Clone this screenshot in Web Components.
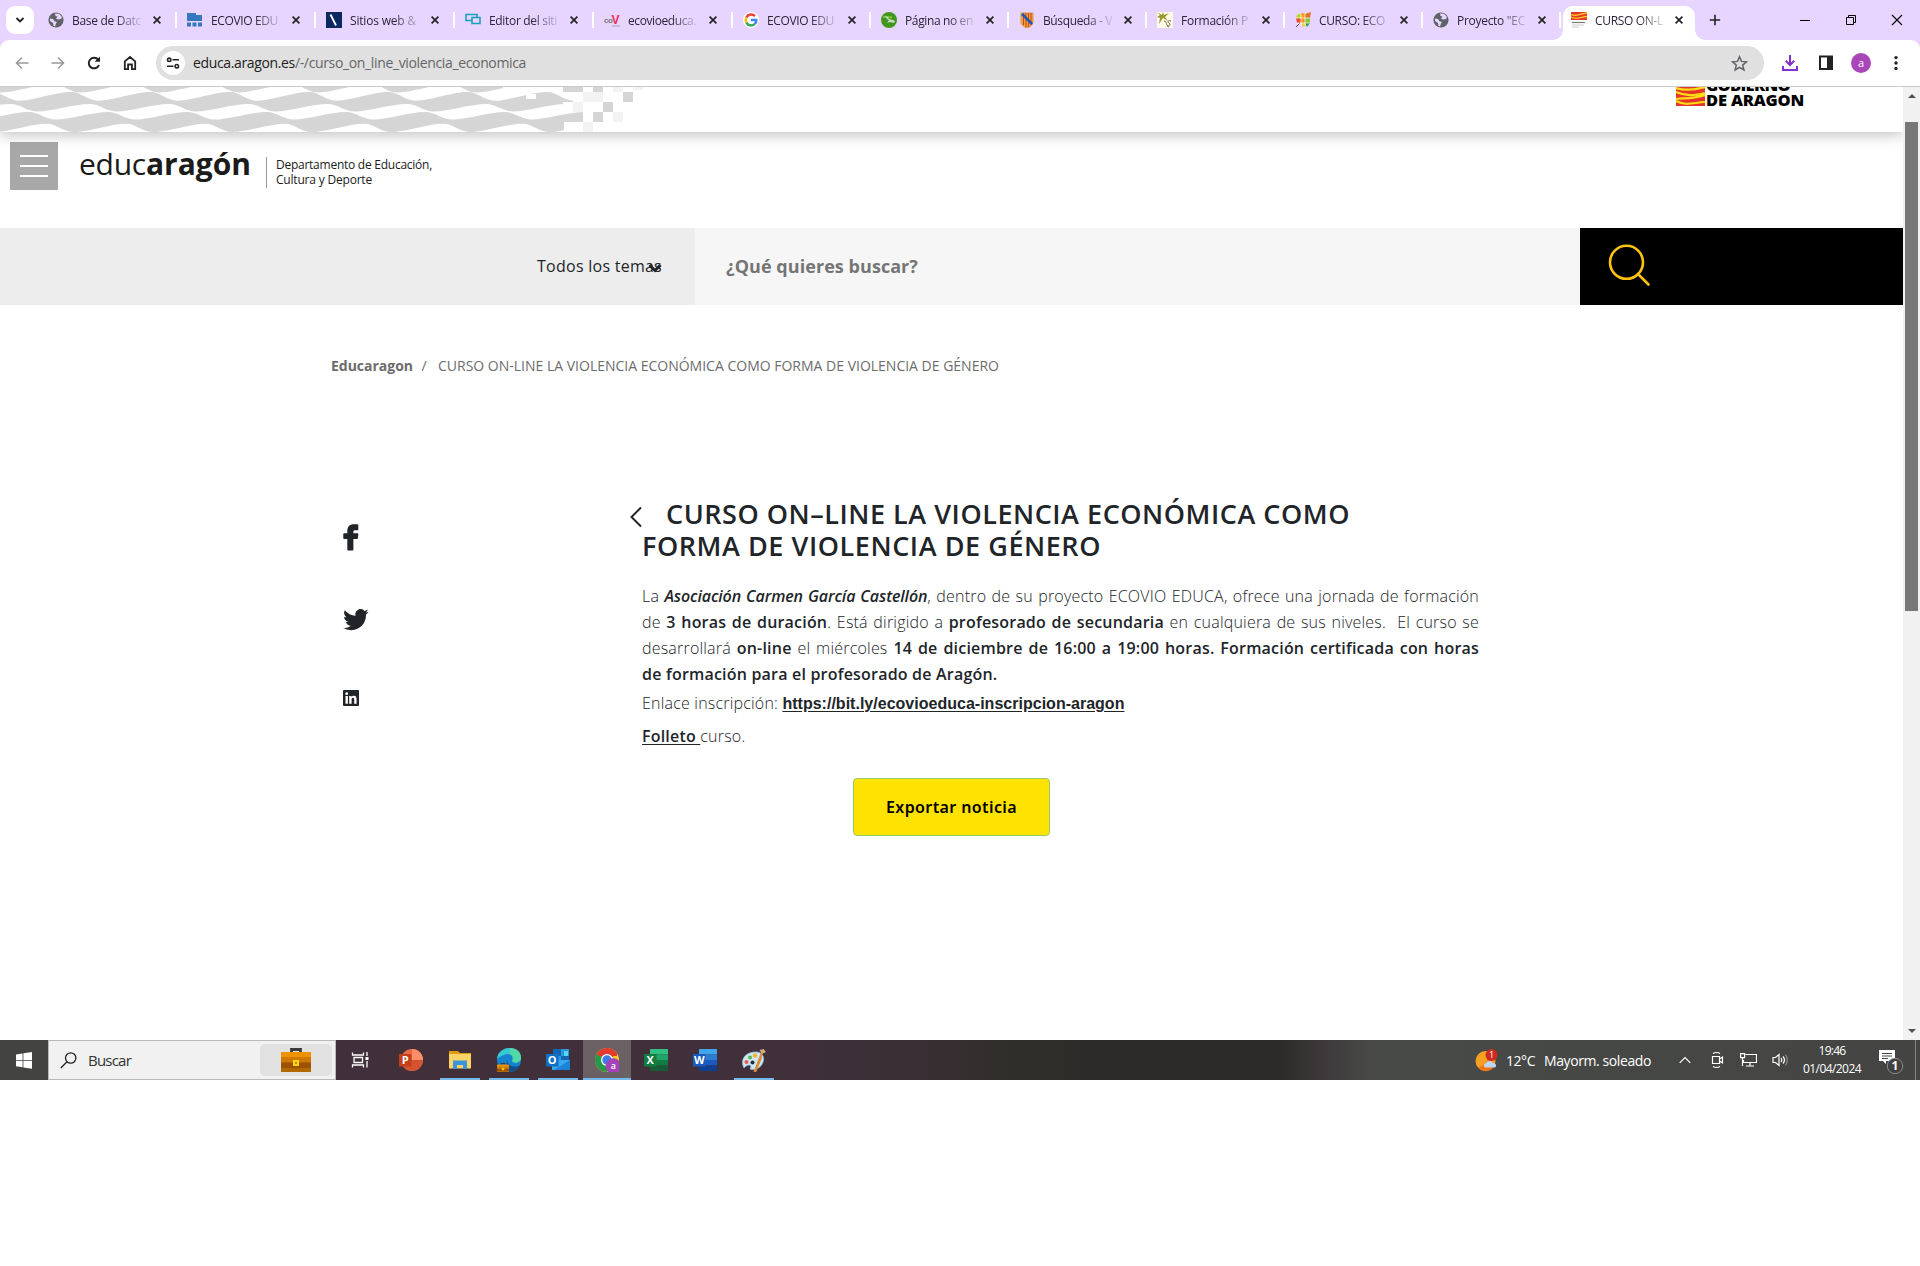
<!DOCTYPE html>
<html lang="es">
<head>
<meta charset="utf-8">
<title>CURSO ON-LINE LA VIOLENCIA ECONÓMICA</title>
<style>
    html, body { margin: 0; background: #fff; }
    body { font-family: "Open Sans", "Noto Sans", sans-serif; color: #212529; width: 1920px; height: 1266px; overflow: hidden; }
</style>
</head>
<body>
<desktop-screen></desktop-screen>

<script>
// Shared base: every component only supplies its markup
class BaseElement extends HTMLElement {
    constructor() {
        super();
        this.attachShadow({ mode: 'open' });
    }

    connectedCallback() {
        this.shadowRoot.innerHTML = this.template().trim();
        this.init();
    }

    template() { return ''; }
    init() {}
}

// One line of text tracked to an exact width
class FitText extends BaseElement {
    template() {
        return `<style>
            :host { display: inline-block; white-space: nowrap; width: ${this.getAttribute('w')}px; }
            span { display: inline-block; }
        </style><span><slot></slot></span>`;
    }

    init() {
        const span = this.shadowRoot.querySelector('span');
        const target = parseFloat(this.getAttribute('w'));
        const count = this.textContent.length;
        span.style.letterSpacing = '0px';
        const natural = span.getBoundingClientRect().width;
        span.style.letterSpacing = `${((target - natural) / count).toFixed(3)}px`;
    }
}

const GLOBE = `<circle cx="8" cy="8" r="7.6" fill="#5f6368"/><path d="M2 6.5l3 .5 1.5 2.2L9 10l-1 1.5-1 3-1.500-.5L5 11 2 9zM7 1.500l4 .3L14 5l-1 2-3 .5-2-1L9.500 4.500 7.500 4z" fill="#e8d5ff"/>`;

const FAVICONS = {
    globe: GLOBE,
    blocks: `<path d="M0 1h9v2h6v6H0z" fill="#3478c0"/><path d="M0 10.500h4v4H0zM5.500 10.500h4v4h-4zM11 10.500h4v4h-4z" fill="#3478c0"/>`,
    navy: `<path d="M0 0h16v16H0z" fill="#0c2860"/><path d="M4.500 2.500l5.500 11" stroke="#fff" stroke-width="1.800"/>`,
    frames: `<path d="M7 8.500H1v-6h11V5M7 5.500h8v6H7z" fill="none" stroke="#1a9fc0" stroke-width="1.600"/>`,
    cov: `<text x="0" y="11" font-size="8" font-weight="700" font-family="Liberation Sans" fill="#777" textLength="9">co</text><text x="7.500" y="12" font-size="12" font-weight="700" font-family="Liberation Sans" fill="#ee2c55">V</text><path d="M8 14h8" stroke="#aaa"/>`,
    google: `<circle cx="8" cy="8" r="8" fill="#fff"/><g fill="none" stroke-width="2.500"><path d="M12 4.200A5.300 5.300 0 0 0 3.400 5.400" stroke="#ea4335"/><path d="M3.400 5.400a5.300 5.300 0 0 0 0 5.200" stroke="#fbbc05"/><path d="M3.400 10.600a5.300 5.300 0 0 0 8.200 1.500" stroke="#34a853"/><path d="M11.600 12.100A5 5 0 0 0 13.300 8H8" stroke="#4285f4"/></g>`,
    green: `<circle cx="8" cy="8" r="8" fill="#3f981b"/><path d="M2 5c4-1 5 1 9 0" stroke="#75c43d" stroke-width="2"/><path d="M4 4l3 1 1 2 4 1 2 1-1 2-4-1-3 1 2-3-2-1z" fill="#cbd6c4"/>`,
    shield: `<path d="M2 1h12v9c0 3-3 5-6 6-3-1-6-3-6-6z" fill="#f6b12e" stroke="#c9994c"/><path d="M4.500 1v12M7 1v14M9.500 1v14M12 1v12" stroke="#d5402c" stroke-width="1.200"/><path d="M3 2l10 10" stroke="#2455b8" stroke-width="2.600"/>`,
    star: `<path d="M0 0h16v16H0z" fill="#fffbe8"/><path d="M0 0l5 3 1-3 1 3 5-2-4 4 3 4-5-3-4 6 1-6-3-1 3-2z" fill="#99992a"/><path d="M7 9c3 0 2 5 5 6M14 9c-3-1-4 1-2 2s1 4-2 3" fill="none" stroke="#706536" stroke-width="1"/>`,
    mosaic: `<path d="M2 3l4-2v5H1z" fill="#c2d332"/><path d="M6 1h4v5H6z" fill="#f7a01d"/><path d="M10 2l6-2-1 6h-5z" fill="#e8722b"/><path d="M1 6h5v5H2z" fill="#e5532e"/><path d="M6 6h4v5H6z" fill="#f6941f"/><path d="M10 6h5v5h-5z" fill="#8cc63e"/><path d="M6 11h4v3l-2 1z" fill="#f3cf2c"/><path d="M10 11h5l-3 4z" fill="#2f9a57"/><path d="M5 11l-4 4" stroke="#555"/><path d="M6 1v12M10 1v12M1 6h14M2 11h13" stroke="#fff" stroke-width=".7"/>`,
    aragon: `<path d="M0 0h16v8H0z" fill="#e4362b"/><path d="M0 2.500c5 2.500 9-1 16-1.500M0 5c5 3 9 0 16-.5" fill="none" stroke="#fbc926" stroke-width="1.300"/><path d="M1 10.500h13" stroke="#777" stroke-width="1.200"/><path d="M1 13h12M1 15h7" stroke="#ccc"/>`
};

class BrowserTab extends BaseElement {
    template() {
        const active = this.hasAttribute('active');
        return `
            <style>
                :host { display: flex; align-items: center; box-sizing: border-box; width: ${this.getAttribute('width')}px; height: 40px; padding-left: 10px; position: relative; font-size: 12px; color: #2d2438; }
                .icon { width: 16px; height: 16px; flex: none; margin-right: 8px; }
                .label { width: 70px; height: 20px; line-height: 20px; margin-top: 1px; overflow: hidden; -webkit-mask-image: linear-gradient(90deg, #000 62%, rgba(0,0,0,.15) 98%); }
                .close { width: 8px; height: 8px; margin-left: ${active ? 10 : 11}px; }
                .line { width: 2px; height: 16px; background: #fff; margin-left: auto; }
                .bg { position: absolute; left: 2px; top: 6px; width: 132px; height: 34px; background: #fff; border-radius: 10px 10px 0 0; z-index: -1; }
                .bg::before, .bg::after { content: ""; position: absolute; bottom: 0; width: 10px; height: 10px; }
                .bg::before { left: -10px; background: radial-gradient(circle at 0 0, transparent 9.5px, #fff 10px); }
                .bg::after { right: -10px; background: radial-gradient(circle at 100% 0, transparent 9.5px, #fff 10px); }
                :host([active]) { z-index: 1; }
            </style>
            ${active ? '<div class="bg"></div>' : ''}
            <svg class="icon" viewBox="0 0 16 16">${FAVICONS[this.getAttribute('icon')]}</svg>
            <div class="label"><slot></slot></div>
            <svg class="close" viewBox="0 0 8 8"><path d="M.6.6l6.800 6.800M7.400.6L.6 7.400" stroke="#222" stroke-width="1.700"/></svg>
            ${active ? '' : '<div class="line"></div>'}`;
    }
}

class TabStrip extends BaseElement {
    template() {
        const tabs = [
            ['globe', 'Base de Datc', 69], ['blocks', 'ECOVIO EDU', 67], ['navy', 'Sitios web &amp;', 66],
            ['frames', 'Editor del siti', 68], ['cov', 'ecovioeduca.', 68], ['google', 'ECOVIO EDU', 67],
            ['green', 'Página no en', 68], ['shield', 'Búsqueda - V', 69], ['star', 'Formación P', 67],
            ['mosaic', 'CURSO: ECO', 66], ['globe', 'Proyecto "EC', 68], ['aragon', 'CURSO ON-L', 68]
        ];
        return `
            <style>
                :host { display: flex; height: 40px; background: #e8d5ff; padding-left: 6px; align-items: center; }
                .menu { width: 28px; height: 28px; border-radius: 9px; background: #fff; margin-right: 4px; display: flex; align-items: center; justify-content: center; }
                svg { display: block; flex: none; }
                .plus { margin-left: 10px; }
                .win { display: flex; margin-left: auto; padding-right: 17px; gap: 34px; }
            </style>
            <div class="menu"><svg width="10" height="10"><path d="M1.500 3L5 6.500 8.500 3" fill="none" stroke="#222" stroke-width="1.800"/></svg></div>
            ${tabs.map(([icon, label, w], i) => `
                <browser-tab icon="${icon}" width="${i < 5 ? 139 : 138}" ${i === 11 ? 'active' : ''}><fit-text w="${w}">${label}</fit-text></browser-tab>`).join('')}
            <svg class="plus" width="12" height="12"><path d="M6 .8v10.400M.8 6h10.400" stroke="#222" stroke-width="1.600"/></svg>
            <div class="win">
                <svg width="12" height="12"><path d="M1 6.500h10" stroke="#000"/></svg>
                <svg width="12" height="12"><path d="M1.500 3.500h7v7h-7zM3.500 3V1.500h7v7H9" fill="none" stroke="#000"/></svg>
                <svg width="12" height="12"><path d="M1 1l10 10M11 1L1 11" stroke="#000" stroke-width="1.100"/></svg>
            </div>`;
    }
}

class BrowserToolbar extends BaseElement {
    template() {
        return `
            <style>
                :host { display: block; background: #e8d5ff; }
                .bar { display: flex; align-items: center; height: 46px; background: #fff; border-radius: 9px 9px 0 0; border-bottom: 1px solid #c9c9c9; padding-left: 14px; }
                svg { display: block; flex: none; }
                .nav { display: flex; gap: 20px; width: 142px; }
                .address { display: flex; align-items: center; box-sizing: border-box; width: 1608px; height: 34px; border-radius: 17px; background: #e0e0e0; padding: 0 16px 0 5px; }
                .site { display: flex; align-items: center; justify-content: center; width: 24px; height: 24px; border-radius: 50%; background: #fff; margin-right: 8px; }
                .url { font-size: 14px; line-height: 20px; color: #666; flex: 1; }
                b { font-weight: 400; color: #222; }
                .actions { display: flex; align-items: center; gap: 18px; padding-left: 17px; }
                .avatar { width: 20px; height: 20px; border-radius: 50%; background: #a946ba; color: #fff; font-size: 11px; line-height: 19px; text-align: center; margin: 0 -1px 0 -2px; }
            </style>
            <div class="bar">
                <div class="nav">
                    <svg width="16" height="16" fill="none" stroke="#9a9a9a" stroke-width="1.600"><path d="M14.500 8H3M8 2.500L2.500 8 8 13.500"/></svg>
                    <svg width="16" height="16" fill="none" stroke="#9a9a9a" stroke-width="1.600"><path d="M1.500 8H13M8 2.500L13.500 8 8 13.500"/></svg>
                    <svg width="16" height="16" fill="none" stroke="#222" stroke-width="2"><path d="M13 10a5.300 5.300 0 1 1-.8-5.300"/><path d="M14 1.500v5.300H8.700z" fill="#222" stroke="none"/></svg>
                    <svg width="16" height="16" fill="none" stroke="#222" stroke-width="1.800"><path d="M2.800 14.100V6.300L8 2l5.200 4.300v7.800H9.900V9.500H6.100v4.600z"/></svg>
                </div>
                <div class="address">
                    <div class="site"><svg width="14" height="12" fill="none" stroke="#222" stroke-width="1.600"><circle cx="3.200" cy="2.800" r="1.700"/><path d="M6.500 2.800H13M1 9.200h6.500"/><circle cx="10.800" cy="9.200" r="1.700"/></svg></div>
                    <div class="url"><fit-text w="333"><b>educa.aragon.es</b>/-/curso_on_line_violencia_economica</fit-text></div>
                    <svg width="17" height="17" viewBox="0 0 17 17"><path d="M8.500 1.800l2 4.600 5 .4-3.800 3.300 1.200 4.900-4.400-2.600-4.400 2.600 1.200-4.900L1.500 6.800l5-.4z" fill="none" stroke="#5f6368" stroke-width="1.500"/></svg>
                </div>
                <div class="actions">
                    <svg width="18" height="18" fill="none" stroke="#8430ce" stroke-width="2"><path d="M9 1v9.500M4.800 6.800L9 11l4.200-4.200M2 12v4h14v-4"/></svg>
                    <svg width="18" height="18"><path d="M3 2.500h12v12.500H3z" fill="none" stroke="#222" stroke-width="2"/><path d="M10 2h6v13h-6z" fill="#222"/></svg>
                    <div class="avatar">a</div>
                    <svg width="16" height="16" fill="#222"><circle cx="8" cy="2.600" r="1.700"/><circle cx="8" cy="8" r="1.700"/><circle cx="8" cy="13.400" r="1.700"/></svg>
                </div>
            </div>`;
    }
}

// Grey wave strip and government logo on top of the site
class GovBanner extends BaseElement {
    edge(trough, troughY, crestY) {
        const period = 79.3;
        let points = '';
        for (let k = -8; k <= 2; k++) {
            const t = trough + k * period;
            const c = t + 52;
            const next = t + period;
            points += `C${t + 13} ${troughY} ${c - 15} ${crestY} ${c} ${crestY}`;
            points += `C${c + 10} ${crestY} ${next - 11} ${troughY} ${next} ${troughY}`;
        }
        return { start: `${trough - 8 * period} ${troughY}`, points };
    }

    // area between a wave and a flat floor, painted back to front
    layer(trough, troughY, crestY, fill) {
        const e = this.edge(trough, troughY, crestY);
        return `<path d="M-400 60L${e.start}${e.points}V60z" fill="${fill}"/>`;
    }

    template() {
        const dark = [[563, 0, 20, 5], [593, 0, 10, 5], [623, 5, 10, 10], [603, 15, 10, 10], [593, 25, 10, 10]];
        const light = [[583, 5, 20, 10], [573, 15, 10, 10], [613, 25, 10, 10], [583, 35, 10, 10], [613, 0, 10, 5], [633, 0, 10, 3]];
        const rects = (list, fill) => list.map(([x, y, w, h]) => `<path d="M${x} ${y}h${w}v${h}h-${w}z" fill="${fill}"/>`).join('');
        return `
            <style>
                :host { display: flex; justify-content: space-between; height: 45px; background: #fff; box-shadow: 0 2px 14px rgba(0,0,0,.28); clip-path: inset(0 0 -30px 0); }
                .waves { display: block; }
                .logo { display: flex; height: 24px; width: 227px; overflow: hidden; align-items: flex-start; }
                .flag { display: block; margin-right: 1px; }
                .name { font-weight: 800; font-size: 16.5px; line-height: 15px; color: #000; margin-top: -10px; }
                .name div { height: 15px; }
            </style>
            <svg class="waves" width="660" height="45">
                <defs><clipPath id="cut"><path d="M0 0H503V1h60V5h10v10h-10v10h20v10h-19v10H0z"/></clipPath></defs>
                <g clip-path="url(#cut)">
                    <path d="M0 0h503v10H0z" fill="#d5d5d5"/>
                    ${this.layer(477, 5.5, -3, '#fff')}
                    ${this.layer(495, 13.7, 5, '#d5d5d5')}
                    ${this.layer(513.5, 24.5, 17, '#fff')}
                    ${this.layer(532, 32.5, 25, '#d5d5d5')}
                    ${this.layer(550, 45, 36.7, '#fff')}
                    <path d="M526 7h10v5h-10z" fill="#fff"/>
                </g>
                ${rects(dark, '#d5d5d5')}${rects(light, '#f3f3f3')}
            </svg>
            <div class="logo">
                <svg class="flag" width="29" height="19"><path d="M0 0h29v19H0z" fill="#e5332a"/><g fill="none" stroke="#ffdd15" stroke-width="2.200"><path d="M0 1c9 3 18 2 29-1M0 5c10 4 17 4 29 1M0 12c9-1 16 0 29-4M0 14c9 5 16 2 29 1"/></g></svg>
                <div class="name"><div><fit-text w="84">GOBIERNO</fit-text></div><div><fit-text w="98">DE ARAGON</fit-text></div></div>
            </div>`;
    }
}

class SiteHeader extends BaseElement {
    template() {
        return `
            <style>
                :host { display: flex; align-items: flex-start; box-sizing: border-box; height: 96px; padding: 10px 0 0 10px; }
                .menu { display: flex; flex-direction: column; justify-content: center; align-items: center; gap: 8px; width: 48px; height: 48px; background: #a8a8a8; }
                .menu i { width: 28px; height: 2px; background: #fff; }
                .brand { margin: 2px 0 0 21px; font-size: 30px; line-height: 40px; color: #1b1b1b; white-space: nowrap; width: 172px; height: 40px; }
                b { font-weight: 700; }
                .rule { width: 1px; height: 31px; background: #999; margin: 15px 9px 0 15px; }
                .dept { font-size: 12px; line-height: 15px; color: #1b1b1b; margin-top: 15px; display: flex; flex-direction: column; }
            </style>
            <div class="menu"><i></i><i></i><i></i></div>
            <div class="brand"><fit-text w="67">educ</fit-text><b><fit-text w="105">aragón</fit-text></b></div>
            <div class="rule"></div>
            <div class="dept"><fit-text w="156">Departamento de Educación,</fit-text><fit-text w="96">Cultura y Deporte</fit-text></div>`;
    }
}

class SearchBar extends BaseElement {
    template() {
        return `
            <style>
                :host { display: flex; height: 77px; line-height: 77px; }
                .topics { position: relative; box-sizing: border-box; width: 695px; background: #ededed; padding-left: 537px; font-size: 16px; color: #212529; }
                .caret { position: absolute; left: 647px; top: 34px; }
                .query { flex: 1; background: #f6f6f6; padding-left: 31px; font-size: 18px; font-weight: 700; color: #757575; }
                .go { box-sizing: border-box; width: 323px; background: #000; padding: 15px 0 0 28px; }
                svg { display: block; }
            </style>
            <div class="topics"><fit-text w="125">Todos los temas</fit-text>
                <svg class="caret" width="16" height="12"><path d="M2.500 3L8 8.500 13.500 3" fill="none" stroke="#212529" stroke-width="3"/></svg>
            </div>
            <div class="query"><fit-text w="192">¿Qué quieres buscar?</fit-text></div>
            <div class="go"><svg width="44" height="44" fill="none" stroke="#ffc20e" stroke-width="2.600" stroke-linecap="round"><circle cx="18.500" cy="19.300" r="16.500"/><path d="M30 31l10.500 10.500"/></svg></div>`;
    }
}

class BreadCrumb extends BaseElement {
    template() {
        return `
            <style>
                :host { display: flex; padding: 51px 0 0 331px; font-size: 14px; line-height: 20px; color: #6c6c6c; }
                b { font-weight: 700; }
                .sep { width: 25px; text-align: center; text-indent: -3px; }
            </style>
            <b><fit-text w="82">Educaragon</fit-text></b><span class="sep">/</span>
            <fit-text w="561">CURSO ON-LINE LA VIOLENCIA ECONÓMICA COMO FORMA DE VIOLENCIA DE GÉNERO</fit-text>`;
    }
}

class ShareLinks extends BaseElement {
    template() {
        return `
            <style>
                :host { display: flex; flex-direction: column; width: 287px; padding-top: 26px; }
                svg { display: block; fill: #212529; }
                .tw { margin: 58px 0 59px; }
            </style>
            <svg width="16" height="27" viewBox="0 0 16 27"><path d="M4.300 26.500V15H1q-.7 0-.7-.7V10q0-.7.7-.7h3.300V7.200C4.300 2.800 6.600.3 10.800.3h3.700q.8 0 .8.7v4.500q0 .7-.8.7h-2.300c-1.400 0-1.800.5-1.800 1.700v1.400h4.200q.8 0 .7.7l-.4 4.300q-.1.700-.8.7h-3.700v10.800q0 .7-.7.7H5q-.7 0-.7-.7z"/></svg>
            <svg class="tw" width="26" height="22" viewBox="0 0 24 20"><path d="M23.600 2.300a9.700 9.700 0 0 1-2.800.8A4.900 4.900 0 0 0 23 .4a9.600 9.600 0 0 1-3.100 1.200A4.800 4.800 0 0 0 11.600 6 13.800 13.800 0 0 1 1.700 1a4.900 4.900 0 0 0 1.500 6.500A4.900 4.900 0 0 1 1 6.900c0 2.300 1.600 4.400 3.900 4.800a4.900 4.900 0 0 1-2.200.1 4.800 4.800 0 0 0 4.600 3.400A9.800 9.800 0 0 1 0 17.200a13.800 13.800 0 0 0 7.500 2.200c9 0 14.100-7.600 13.700-14.500a10 10 0 0 0 2.400-2.600z"/></svg>
            <svg width="16" height="16" viewBox="0 0 16 16"><path d="M1 0h14q1 0 1 1v14q0 1-1 1H1q-1 0-1-1V1q0-1 1-1z"/><circle cx="3.700" cy="3.700" r="1.400" fill="#fff"/><path d="M2.500 6h2.400v7.700H2.500zM6.200 6h2.300v1.100c.5-.8 1.300-1.300 2.300-1.300 2.300 0 2.800 1.500 2.800 3.600v4.300h-2.400V9.900c0-1 0-2.100-1.300-2.100S8.600 8.800 8.600 9.900v3.800H6.200z" fill="#fff"/></svg>`;
    }
}

class NewsArticle extends BaseElement {
    template() {
        return `
            <style>
                :host { display: flex; width: 870px; }
                .back { display: block; margin-top: 8px; width: 12px; }
                h1 { margin: 0 0 21px; font-size: 27px; font-weight: 600; line-height: 32px; }
                h1 div { height: 32px; }
                .first { padding-left: 24px; }
                .line { font-size: 16px; font-weight: 300; line-height: 26px; height: 26px; white-space: nowrap; width: 837px; letter-spacing: .2px; }
                .full { text-align: justify; text-align-last: justify; white-space: normal; }
                b { font-weight: 600; }
                b i { letter-spacing: -.1px; }
                .link { margin-top: 3px; }
                .sheet { margin-top: 7px; }
                u { text-underline-offset: 2px; }
                .link u { font-family: "Liberation Sans", sans-serif; font-weight: 700; }
                .btn { display: flex; align-items: center; justify-content: center; box-sizing: border-box; width: 197px; height: 58px; margin: 29px 0 0 211px; border: 1px solid #93cb62; border-radius: 4px; background: #ffe300; color: #000; font-family: "Noto Sans", sans-serif; font-weight: 600; font-size: 16px; }
            </style>
            <svg class="back" width="12" height="22" viewBox="0 0 12 22"><path d="M11 1.500L1.500 11l9.500 9.500" fill="none" stroke="#212529" stroke-width="2"/></svg>
            <div>
                <h1><div class="first"><fit-text w="684">CURSO ON–LINE LA VIOLENCIA ECONÓMICA COMO</fit-text></div><div><fit-text w="459">FORMA DE VIOLENCIA DE GÉNERO</fit-text></div></h1>
                <div class="line full">La <b><i>Asociación Carmen García Castellón</i></b>, dentro de su proyecto ECOVIO EDUCA, ofrece una jornada de formación</div>
                <div class="line full">de <b>3 horas de duración</b>. Está dirigido a <b>profesorado de secundaria</b> en cualquiera de sus niveles.&nbsp; El curso se</div>
                <div class="line full">desarrollará <b>on-line</b> el miércoles <b>14 de diciembre de 16:00 a 19:00 horas. Formación certificada con horas</b></div>
                <div class="line"><b>de formación para el profesorado de Aragón.</b></div>
                <div class="line link">Enlace inscripción: <fit-text w="342"><u>https://bit.ly/ecovioeduca-inscripcion-aragon</u></fit-text></div>
                <div class="line sheet"><b><u>Folleto </u></b>curso.</div>
                <div class="btn"><fit-text w="131">Exportar noticia</fit-text></div>
            </div>`;
    }
}

class PageScrollbar extends BaseElement {
    template() {
        return `
            <style>
                :host { display: flex; flex-direction: column; align-items: center; justify-content: space-between; box-sizing: border-box; width: 17px; height: 953px; background: #f1f1f1; padding: 7px 0; }
                .thumb { width: 13px; height: 489px; background: #787878; margin: 24px 0 auto; }
                svg { display: block; }
            </style>
            <svg width="8" height="4"><path d="M0 4l4-4 4 4z" fill="#505050"/></svg>
            <div class="thumb"></div>
            <svg width="8" height="4"><path d="M0 0h8L4 4z" fill="#505050"/></svg>`;
    }
}

const office = (letter, tile, rows) => `
    ${rows.map((fill, i) => `<path d="M6 ${1 + i * 5.5}h18v5.500H6z" fill="${fill}"/>`).join('')}
    <path d="M0 6h12.500v12.500H0z" fill="${tile}"/>
    <text x="6.200" y="16.200" font-family="Open Sans" font-size="11" font-weight="700" fill="#fff" text-anchor="middle">${letter}</text>`;

const CASE = `<path d="M10.500 4V1.500h9V4" fill="none" stroke="#3c3c3c" stroke-width="2.800"/><path d="M0 4h30v20H0z" fill="#ee9200"/><path d="M0 9h30v6H0z" fill="#ce7800"/><path d="M0 14.500h30V24H0z" fill="#9b5300"/><path d="M0 20h30v4H0z" fill="#b26800"/><path d="M12 12h6v6h-6z" fill="#ffd51c"/><path d="M14 14h2v2h-2z" fill="#c08700"/>`;

const APPS = {
    view: `<g fill="none" stroke="#fff" stroke-width="1.300"><path d="M4.500 4.500V7h11V4.500M4.500 19.500V17h11v2.500M6 9.500h8.500v5H6zM19 4v4M19 13v6.500"/></g><path d="M17.500 9h3v3h-3z" fill="#fff"/>`,
    ppt: `<circle cx="13" cy="12" r="11" fill="#ed6c47"/><path d="M13 1a11 11 0 0 1 11 11H13z" fill="#ff8f6b"/><path d="M24 12a11 11 0 0 1-20 6l9-6z" fill="#d35230"/><path d="M0 6h12.500v12.500H0z" fill="#c43e1c"/><text x="6.200" y="16.200" font-family="Open Sans" font-size="11" font-weight="700" fill="#fff" text-anchor="middle">P</text>`,
    files: `<path d="M1 3h9l2 2h11v6H1z" fill="#dd9b12"/><path d="M1 6h22v14.500H1z" fill="#fbd366"/><path d="M5 21v-8.500h14V21h-4v-4H9v4z" fill="#3a95dc"/>`,
    edge: `<circle cx="12" cy="12" r="12" fill="#1683cf"/><path d="M0 11C1-3 24-4 24 10c0 5-7 6-9 3 3-5-3-9-8-6-3 1-5 2-7 4z" fill="#38c8d0"/><path d="M13 0c8 0 12 6 11 11-1 4-7 5-9 2 2-4 0-6-2-7z" fill="#5bdc9b" opacity=".75"/><path d="M10 12c1 7 8 8 13 5-3 6-9 8-14 6z" fill="#124e91"/><g transform="translate(0 15) scale(.4)">${CASE}</g>`,
    outlook: `<path d="M7 1h16v13H7z" fill="#2895dc"/><path d="M7 1h8v7H7zM15 8h8v5h-8z" fill="#1066b5"/><path d="M18 3h4v5h-4z" fill="#52d8ff"/><path d="M6 12h18v10H6z" fill="#38a7ec"/><path d="M24 12v10H8z" fill="#1b84d8"/><path d="M0 6h12.500v12.500H0z" fill="#0f6fc7"/><text x="6.200" y="16.200" font-family="Open Sans" font-size="11" font-weight="700" fill="#fff" text-anchor="middle">O</text>`,
    chrome: `<circle cx="12" cy="12" r="12" fill="#fbc52c"/><path d="M12 12L1.600 6A12 12 0 0 1 22.400 6z" fill="#e23b30"/><path d="M12 12L1.600 6A12 12 0 0 0 12 24l5-9z" fill="#279847"/><path d="M2 6h20v2H4z" fill="#e23b30"/><circle cx="12" cy="12" r="6" fill="#fff"/><circle cx="12" cy="12" r="4.700" fill="#3c7de8"/><circle cx="18.300" cy="18" r="7.700" fill="#a542b8"/><text x="18.300" y="21" font-family="Open Sans" font-size="9" font-weight="600" fill="#fff" text-anchor="middle">a</text>`,
    excel: office('X', '#107c41', ['#2fc080', '#20a366', '#107c41', '#185c37']),
    word: office('W', '#185abd', ['#41a5ee', '#2b7cd3', '#185abd', '#103f91']),
    paint: `<path d="M2 20C-2 13 2 5 12 4c8-1 11 5 9 10-2 6-8 9-13 7 3-5-3-5-6-1z" fill="#cfe6f4" stroke="#8fc2df" stroke-width=".7"/><circle cx="4.500" cy="14" r="2" fill="#e85b4c"/><circle cx="8" cy="9.500" r="2" fill="#5cb74a"/><circle cx="13" cy="7.500" r="2.200" fill="#f6b52a"/><circle cx="10.500" cy="14.500" r="2" fill="#22303c"/><path d="M20 3l-8 21 2-.5L19.500 10z" fill="#dc8a3c" stroke="#dc8a3c"/><path d="M17.500 2l4-1 2.500 3-4 2z" fill="#d9a878"/>`
};

class TaskIcon extends BaseElement {
    template() {
        return `
            <style>
                :host { display: flex; flex: none; align-items: center; justify-content: center; position: relative; width: 49px; height: 40px; }
                :host([active]) { background: linear-gradient(90deg, transparent 1px, #6b6165 1px); }
                svg { width: 24px; height: 24px; }
                .open { position: absolute; left: 5px; right: 4px; bottom: 0; height: 2px; background: #76b9ed; }
                :host([active]) .open { left: 1px; right: 0; }
            </style>
            <svg viewBox="0 0 24 24">${APPS[this.getAttribute('app')]}</svg>
            ${this.hasAttribute('open') ? '<div class="open"></div>' : ''}`;
    }
}

class WinTaskbar extends BaseElement {
    template() {
        return `
            <style>
                :host { display: flex; align-items: center; height: 40px; color: #fff; background: linear-gradient(90deg, #41303a 0, #41303a 760px, #392e34 920px, #302f2c 1000px, #2c2b29 1100px, #2c2b29 1280px, #3c3839 1320px, #484a48 1370px, #444543 1920px); }
                svg { display: block; flex: none; }
                .start { display: flex; align-items: center; justify-content: center; width: 48px; height: 40px; background: #434442; }
                .search { display: flex; align-items: center; box-sizing: border-box; width: 288px; height: 40px; background: #f1f1f1; border: 1px solid #b9b9b9; padding: 0 3px 0 11px; color: #333; font-size: 15px; }
                .search .label { flex: 1; padding-left: 11px; }
                .hint { display: flex; justify-content: center; align-items: center; width: 72px; height: 32px; border-radius: 5px; background: #e1e1e1; }
                .tray { display: flex; align-items: center; margin-left: auto; height: 40px; }
                .weather { display: flex; gap: 9px; font-size: 14px; margin-left: 8px; width: 173px; }
                .clock { display: flex; flex-direction: column; align-items: center; width: 58px; font-size: 12px; line-height: 18px; margin: 0 17px 1px 14px; }
                .end { width: 1px; height: 40px; background: #858585; margin: 0 4px 0 11px; }
                .camera { margin-left: 20px; }
                .network { margin-left: 16px; }
                .sound { margin-left: 15px; }
                task-icon:first-of-type { margin-left: -1px; }
                task-icon[app="ppt"] { margin-left: 2px; }
            </style>
            <div class="start"><svg width="16" height="17" fill="#fff"><path d="M0 2.500L6.600 1.400v6.500H0zM7.400 1.300L16 0v7.900H7.400zM0 8.800h6.600v6.500L0 14.300zM7.400 8.800H16v7.900l-8.600-1.300z"/></svg></div>
            <div class="search">
                <svg width="17" height="17" fill="none" stroke="#222" stroke-width="1.300"><circle cx="10.700" cy="6" r="5.200"/><path d="M7 9.700L.8 16"/></svg>
                <span class="label"><fit-text w="43">Buscar</fit-text></span>
                <div class="hint"><svg width="30" height="24" viewBox="0 0 30 24">${CASE}</svg></div>
            </div>
            <task-icon app="view"></task-icon>
            <task-icon app="ppt"></task-icon>
            <task-icon app="files" open></task-icon>
            <task-icon app="edge" open></task-icon>
            <task-icon app="outlook" open></task-icon>
            <task-icon app="chrome" open active></task-icon>
            <task-icon app="excel"></task-icon>
            <task-icon app="word"></task-icon>
            <task-icon app="paint" open></task-icon>
            <div class="tray">
                <svg width="23" height="23"><circle cx="10.500" cy="12" r="10" fill="#f6a021"/><path d="M18 19A10 10 0 0 1 3 18.500C8 18 14 12 14 5z" fill="#ee7612"/><path d="M10 18.500a2.500 2.500 0 0 1 1-4.500 4 4 0 0 1 7 0 2.500 2.500 0 0 1 2 4.500z" fill="#bcd6f8"/><circle cx="16.500" cy="6" r="6" fill="#cc2b20"/><text x="16.500" y="9.200" font-family="Open Sans" font-size="9" fill="#fff" text-anchor="middle">1</text></svg>
                <div class="weather"><fit-text w="29">12°C</fit-text><fit-text w="107">Mayorm. soleado</fit-text></div>
                <svg width="12" height="8" fill="none" stroke="#fff" stroke-width="1.200"><path d="M.7 6.800L6 1.500l5.300 5.300"/></svg>
                <svg class="camera" width="13" height="18" fill="none" stroke="#fff" stroke-width="1.200"><path d="M1.500 5.500h7v7h-7zM8.500 8l3-2v6l-3-2M2 2.500q3.500-2 7 0M2 15.500q3.500 2 7 0"/></svg>
                <svg class="network" width="17" height="16" fill="none" stroke="#fff" stroke-width="1.200"><path d="M5.500 2.500h11v8h-13V8M10 10.500V14M6 14h8M.6 1.600h4v4h-4zM2.500 5.600V14"/></svg>
                <svg class="sound" width="17" height="16" fill="none" stroke="#fff" stroke-width="1.200"><path d="M1 5.500h2.500L7 2.500v11L3.500 10.500H1zM9 6q1.500 2 0 4M11 4.500q3 3.500 0 7"/><path d="M13.500 2.500q3.500 5.500 0 11" stroke="#8d8d8d"/></svg>
                <div class="clock"><fit-text w="27">19:46</fit-text><fit-text w="58">01/04/2024</fit-text></div>
                <svg width="26" height="28"><path d="M1 4h16v11H8v3l-3-3H1z" fill="#fff"/><path d="M4 7.500h10M4 10h10M4 12.500h6" stroke="#444"/><circle cx="17" cy="20" r="7.700" fill="#3f403f" stroke="#8a8a8a"/><text x="17" y="24" font-family="Open Sans" font-size="12" font-weight="700" fill="#fff" text-anchor="middle">1</text></svg>
                <div class="end"></div>
            </div>`;
    }
}

class DesktopScreen extends BaseElement {
    template() {
        return `
            <style>
                :host { display: block; width: 1920px; }
                .view { display: flex; height: 953px; }
                .page { width: 1903px; }
                .content { display: flex; padding: 122px 0 0 343px; }
            </style>
            <tab-strip></tab-strip>
            <browser-toolbar></browser-toolbar>
            <div class="view">
                <div class="page">
                    <gov-banner></gov-banner>
                    <site-header></site-header>
                    <search-bar></search-bar>
                    <bread-crumb></bread-crumb>
                    <div class="content">
                        <share-links></share-links>
                        <news-article></news-article>
                    </div>
                </div>
                <page-scrollbar></page-scrollbar>
            </div>
            <win-taskbar></win-taskbar>`;
    }
}

// Leaves last so that text is measured inside finished parents
customElements.define('desktop-screen', DesktopScreen);
customElements.define('tab-strip', TabStrip);
customElements.define('browser-tab', BrowserTab);
customElements.define('browser-toolbar', BrowserToolbar);
customElements.define('gov-banner', GovBanner);
customElements.define('site-header', SiteHeader);
customElements.define('search-bar', SearchBar);
customElements.define('bread-crumb', BreadCrumb);
customElements.define('share-links', ShareLinks);
customElements.define('news-article', NewsArticle);
customElements.define('page-scrollbar', PageScrollbar);
customElements.define('win-taskbar', WinTaskbar);
customElements.define('task-icon', TaskIcon);
customElements.define('fit-text', FitText);
</script>
</body>
</html>
